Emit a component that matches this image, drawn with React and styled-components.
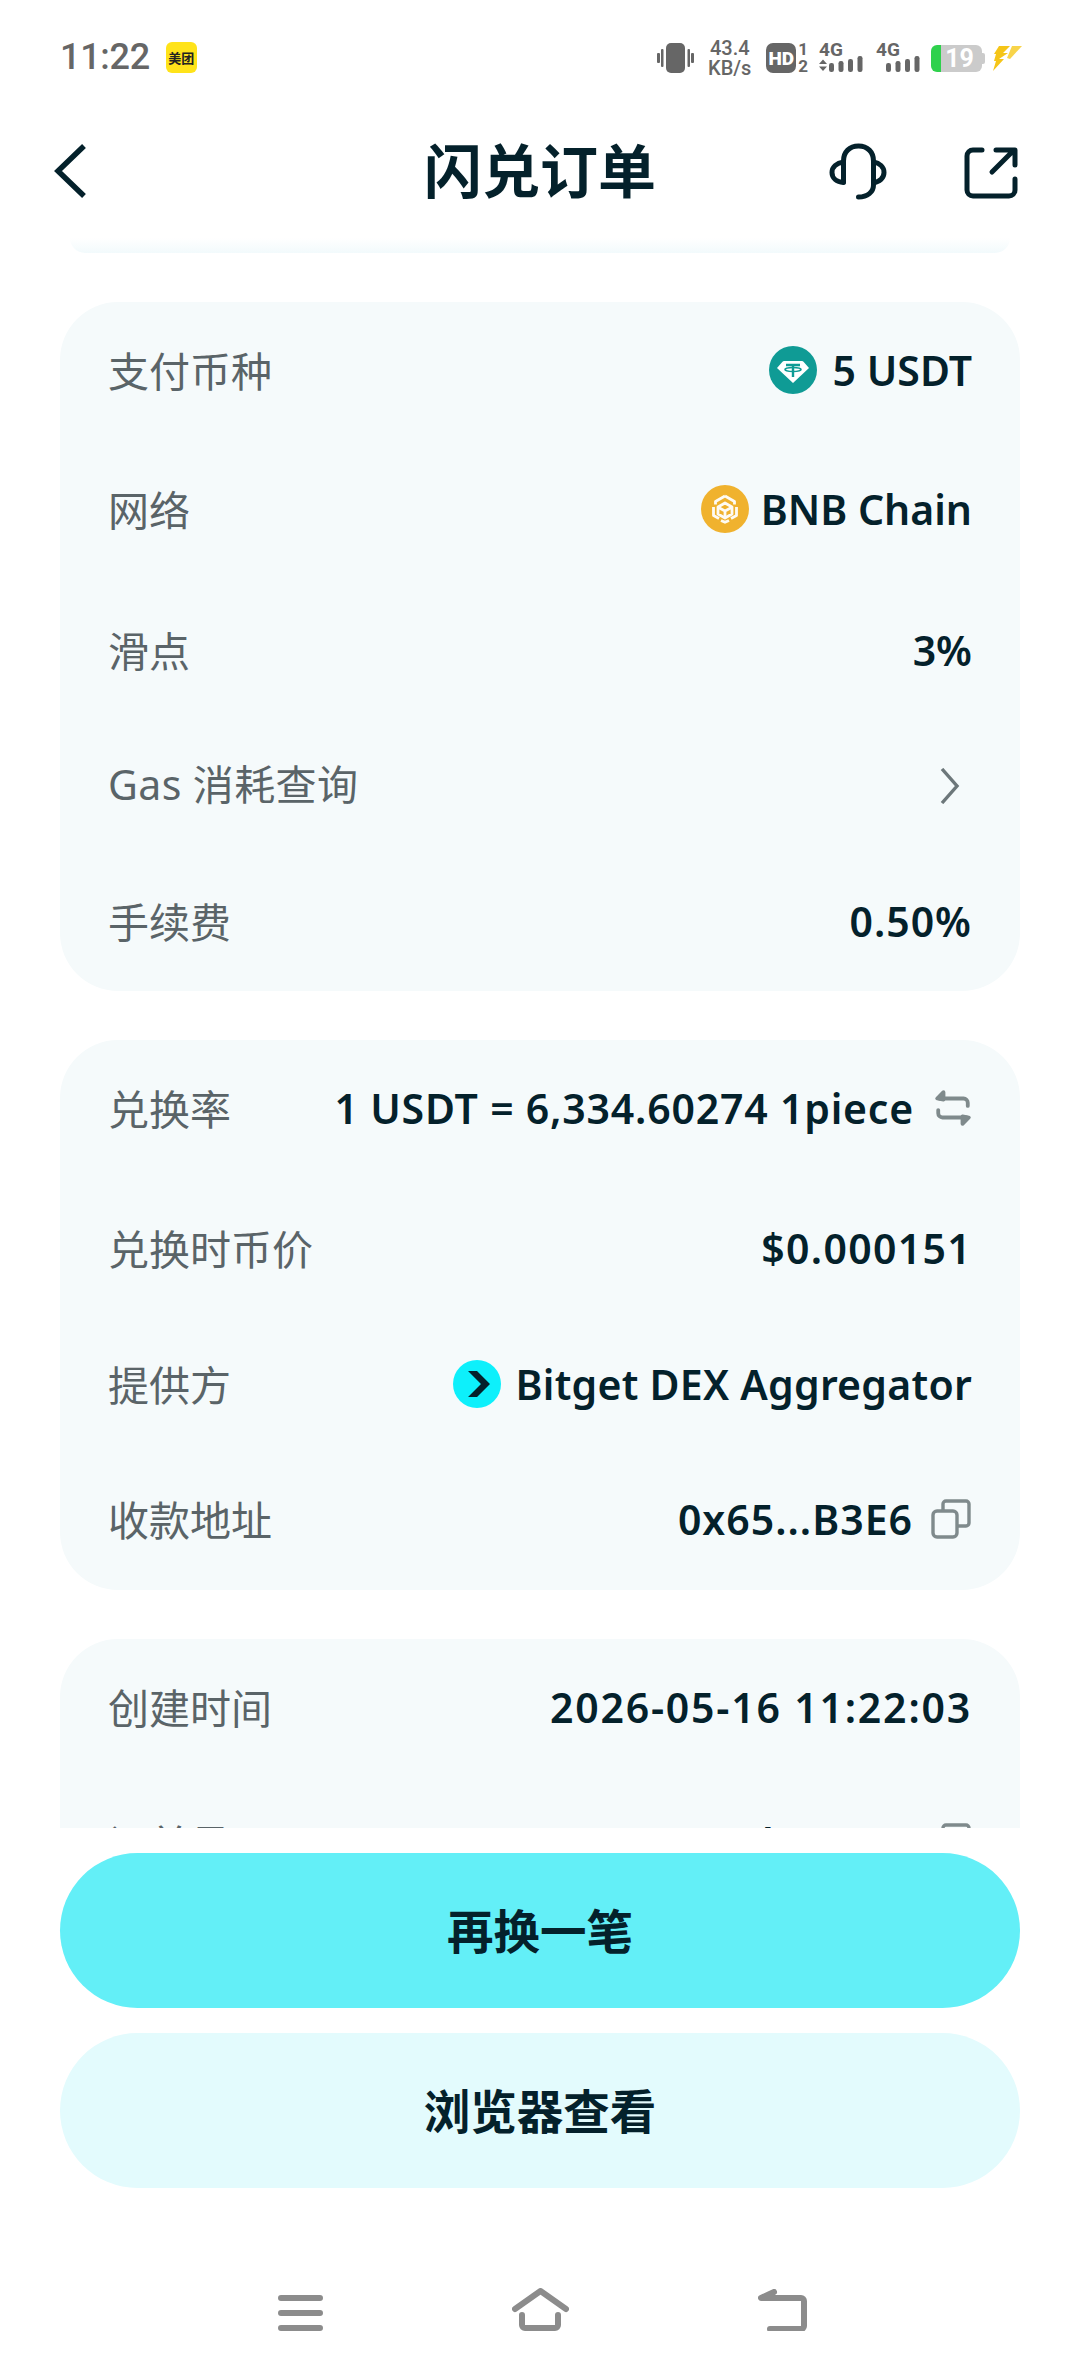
import React from "react";
import styled, { createGlobalStyle } from "styled-components";

const GlobalStyle = createGlobalStyle`
  html, body {
    margin: 0;
    padding: 0;
    background: #fff;
  }
  * {
    box-sizing: border-box;
  }
`;

const FONT = `"Noto Sans", "Noto Sans CJK SC", sans-serif`;
const CJK = `"Noto Sans CJK SC", "Noto Sans", sans-serif`;

const Page = styled.div`
  width: 1080px;
  height: 2376px;
  display: flex;
  flex-direction: column;
  overflow: hidden;
  background: #fff;
  font-family: ${FONT};
  color: #04212b;
`;

const StatusBar = styled.div`
  height: 114px;
  padding: 37px 58px 0 60px;
  display: flex;
  justify-content: space-between;
  align-items: flex-start;
  color: #666;
`;

const StatusLeft = styled.div`
  display: flex;
  align-items: center;
  gap: 16px;
  height: 40px;
`;

const Clock = styled.span`
  font-family: Roboto, sans-serif;
  font-weight: 500;
  font-size: 36px;
  letter-spacing: -0.3px;
`;

const AppBadge = styled.span`
  width: 31px;
  height: 31px;
  border-radius: 6px;
  background: #ffe31a;
  color: #222;
  font-family: ${CJK};
  font-size: 13px;
  font-weight: 700;
  display: flex;
  align-items: center;
  justify-content: center;
`;

const StatusRight = styled.div`
  display: flex;
  align-items: center;
  height: 40px;
  margin-top: 1px;
`;

const Speed = styled.div`
  margin: 0 13px 0 12px;
  width: 47px;
  display: flex;
  flex-direction: column;
  align-items: center;
  font-family: Roboto, sans-serif;
  font-weight: 500;
  font-size: 20px;
  line-height: 20px;
  white-space: nowrap;
`;

const HdBadge = styled.span`
  width: 30px;
  height: 30px;
  border-radius: 7px;
  background: #666;
  color: #fff;
  font-family: Roboto, sans-serif;
  font-weight: 900;
  font-size: 19px;
  display: flex;
  align-items: center;
  justify-content: center;
`;

const SimSlots = styled.div`
  margin: 0 11px 0 2px;
  display: flex;
  flex-direction: column;
  align-items: center;
  font-family: Roboto, sans-serif;
  font-weight: 700;
  font-size: 17px;
  line-height: 17px;
`;

const Signal = styled.div`
  position: relative;
  width: 45px;
  height: 30px;
  margin-right: ${(p) => p.$gap}px;
`;

const SignalLabel = styled.span`
  position: absolute;
  left: 0;
  top: -2px;
  font-family: Roboto, sans-serif;
  font-weight: 700;
  font-size: 19px;
  line-height: 18px;
`;

const Battery = styled.div`
  width: 51px;
  height: 27px;
  border-radius: 6px;
  background: linear-gradient(90deg, #2fd14d 0 10px, #cbcbcb 10px);
  color: #fff;
  font-family: Roboto, sans-serif;
  font-weight: 700;
  font-size: 25px;
  display: flex;
  align-items: center;
  justify-content: center;
  padding-left: 6px;
`;

const BatteryCap = styled.span`
  width: 3px;
  height: 11px;
  margin: 0 8px 0 0;
  border-radius: 0 2px 2px 0;
  background: #cbcbcb;
`;

const Header = styled.div`
  height: 124px;
  padding-bottom: 16px;
  position: relative;
  display: flex;
  align-items: center;
  justify-content: center;
  flex-shrink: 0;
`;

const Title = styled.h1`
  margin: 0;
  font-family: ${CJK};
  font-size: 58px;
  font-weight: 700;
  color: #04212b;
  line-height: 1;
`;

const HeaderIcon = styled.svg`
  position: absolute;
  top: ${(p) => p.$top}px;
  left: ${(p) => p.$left}px;
`;

const Scroller = styled.div`
  flex: 1;
  min-height: 0;
  overflow: hidden;
  display: flex;
  flex-direction: column;
  gap: 49px;
  padding: 0 60px;
`;

const PrevCardEnd = styled.div`
  height: 15px;
  margin: 0 10px;
  flex-shrink: 0;
  background: linear-gradient(#fff, #f2fafc);
  border-radius: 0 0 60px 60px;
`;

const Card = styled.section`
  flex-shrink: 0;
  background: #f5fafb;
  border-radius: 58px;
`;

const Row = styled.div`
  height: ${(p) => p.$h}px;
  padding: 0 48px;
  display: flex;
  align-items: center;
  justify-content: space-between;
`;

const Label = styled.span`
  font-family: ${CJK};
  font-size: 41px;
  color: #5a6468;
  padding-bottom: 2px;
`;

const LatinLabel = styled(Label)`
  font-family: ${FONT};
  letter-spacing: 0.4px;
  margin-bottom: 7px;
`;

const Value = styled.div`
  display: flex;
  align-items: center;
  gap: ${(p) => p.$gap || 12}px;
  font-size: 41px;
  font-weight: 600;
  letter-spacing: ${(p) => p.$track || 0}px;
  color: #04212b;
  white-space: nowrap;
`;

const Footer = styled.div`
  flex-shrink: 0;
  padding: 25px 60px 0;
  display: flex;
  flex-direction: column;
  gap: 25px;
  background: #fff;
`;

const Button = styled.button`
  height: 155px;
  border: 0;
  padding: 0 0 5px;
  border-radius: 78px;
  background: ${(p) => (p.$primary ? "#63eff7" : "#e3fbfd")};
  color: #04212b;
  font-family: ${CJK};
  font-size: 46.5px;
  font-weight: 700;
`;

const NavBar = styled.div`
  height: 188px;
  flex-shrink: 0;
  padding: 0 273px 45px 278px;
  display: flex;
  align-items: flex-end;
  justify-content: space-between;
`;

const ChevronSlot = styled.span`
  display: flex;
  margin-right: 12px;
`;

const Vibrate = () => (
  <svg width="37" height="30" viewBox="0 0 37 30">
    <rect x="9" y="0" width="19" height="30" rx="5" fill="#666" />
    <rect x="0" y="10" width="3" height="10" rx="1" fill="#666" />
    <rect x="4" y="6" width="2.5" height="18" rx="1" fill="#666" />
    <rect x="30.5" y="6" width="2.5" height="18" rx="1" fill="#666" />
    <rect x="34" y="10" width="3" height="10" rx="1" fill="#666" />
  </svg>
);

const Bars = ({ arrows }) => (
  <svg width="45" height="30" viewBox="0 0 45 30" style={{ position: "absolute", left: 0, top: 0 }}>
    {arrows && <path d="M0 21l4-4.5 4 4.5zM0 23.5h8L4 28z" fill="#666" />}
    <rect x="10" y="20" width="5" height="9" rx="2.2" fill="#666" />
    <rect x="19.5" y="18" width="5" height="11" rx="2.2" fill="#666" />
    <rect x="29" y="16" width="5" height="13" rx="2.2" fill="#666" />
    <rect x="38.5" y="13" width="5" height="16" rx="2.2" fill="#666" />
  </svg>
);

const Bolt = () => (
  <svg width="29" height="25" viewBox="0 0 29 25">
    <path d="M6 0h11L10 7h5L6 13h5L0 25l3-10H1l2-7H1z" fill="#f5c518" />
    <path d="M19 0h10L17 13l-3-1z" fill="#f8d44a" />
  </svg>
);

const TetherIcon = () => (
  <svg width="48" height="48" viewBox="0 0 48 48">
    <circle cx="24" cy="24" r="24" fill="#0f9b95" />
    <path d="M15 15h18a2 2 0 0 1 1.5.7l5.5 6.3L24 37 8 22l5.5-6.3a2 2 0 0 1 1.5-.7z" fill="#fff" />
    <path d="M17 19h14M24 19v12" fill="none" stroke="#0f9b95" strokeWidth="2.4" />
    <ellipse cx="24" cy="23.5" rx="8" ry="2" fill="none" stroke="#0f9b95" strokeWidth="1.6" />
  </svg>
);

const BnbIcon = () => (
  <svg width="48" height="48" viewBox="0 0 48 48">
    <circle cx="24" cy="24" r="24" fill="#f0b22e" />
    <g fill="none" stroke="#fff" strokeWidth="2.8" strokeLinejoin="round" opacity="0.95">
      <path d="M24 11l9.5 5.5v3M24 11l-9.5 5.5v3" />
      <path d="M12.5 22v8.5l5.5 3M35.5 22v8.5l-5.5 3" />
      <path d="M24 18l7 4v7l-7 4-7-4v-7z" />
      <path d="M17.5 22.5L24 26l6.5-3.5M24 26v7" />
      <path d="M20 35.5l4 1.8 4-1.8" />
    </g>
  </svg>
);

const BitgetIcon = () => (
  <svg width="48" height="48" viewBox="0 0 48 48">
    <circle cx="24" cy="24" r="24" fill="#0df0fb" />
    <path d="M15 11h9l13 13-13 13h-9l13-13z" fill="#04212b" />
  </svg>
);

const SwapIcon = () => (
  <svg width="38" height="38" viewBox="0 0 36 36" fill="none" stroke="#7f8a8c" strokeWidth="3.6" strokeLinecap="round" strokeLinejoin="round">
    <path d="M9 3L3 9l6 1z" fill="#7f8a8c" />
    <path d="M5 9h23a4 4 0 0 1 4 4v3" />
    <path d="M27 33l6-6-6-1z" fill="#7f8a8c" />
    <path d="M31 27H8a4 4 0 0 1-4-4v-3" />
  </svg>
);

const CopyIcon = () => (
  <svg width="42" height="40" viewBox="0 0 40 40" fill="none" stroke="#7f8a8c" strokeWidth="3.4" strokeLinejoin="round">
    <rect x="2" y="12" width="24" height="26" rx="4" />
    <path d="M12 12V5a3 3 0 0 1 3-3h20a3 3 0 0 1 3 3v19a3 3 0 0 1-3 3h-9" />
  </svg>
);

const ChevronRight = () => (
  <svg width="20" height="36" viewBox="0 0 20 36" fill="none" stroke="#6c777a" strokeWidth="3.4">
    <path d="M2 1l15 17L2 35" />
  </svg>
);

const NavIcon = ({ width, height, children }) => (
  <svg width={width} height={height} viewBox={`0 0 ${width} ${height}`} fill="none" stroke="#8c8c8c" strokeWidth="6" strokeLinecap="round" strokeLinejoin="round">
    {children}
  </svg>
);

export default function App() {
  return (
    <Page>
      <GlobalStyle />
      <StatusBar>
        <StatusLeft>
          <Clock>11:22</Clock>
          <AppBadge>美团</AppBadge>
        </StatusLeft>
        <StatusRight>
          <Vibrate />
          <Speed>
            <span>43.4</span>
            <span>KB/s</span>
          </Speed>
          <HdBadge>HD</HdBadge>
          <SimSlots>
            <span>1</span>
            <span>2</span>
          </SimSlots>
          <Signal $gap={12}>
            <SignalLabel>4G</SignalLabel>
            <Bars arrows />
          </Signal>
          <Signal $gap={10}>
            <SignalLabel>4G</SignalLabel>
            <Bars />
          </Signal>
          <Battery>19</Battery>
          <BatteryCap />
          <Bolt />
        </StatusRight>
      </StatusBar>

      <Header>
        <Title>闪兑订单</Title>
        <HeaderIcon $left={52} $top={29} width="36" height="56" viewBox="0 0 36 56" fill="none" stroke="#04212b" strokeWidth="5.5">
          <path d="M32 3L6 28l26 25" />
        </HeaderIcon>
        <HeaderIcon $left={810} $top={16} width="80" height="72" viewBox="0 0 80 72" fill="none" stroke="#04212b" strokeWidth="5" strokeLinecap="round" strokeLinejoin="round">
          <path d="M33.5 52V31c0-9 6-15 15-15s15 6 15 15v24c0 7-6 12-15 12" />
          <path d="M33.5 32c-7 1-11.5 5-11.5 10.5S26.5 52 33.5 52.5" />
          <path d="M63.5 32c6 1 10.5 5 10.5 10.5S69.5 52 63.5 52.5" />
        </HeaderIcon>
        <HeaderIcon $left={960} $top={31} width="60" height="56" viewBox="0 0 60 56" fill="none" stroke="#04212b" strokeWidth="5" strokeLinecap="round" strokeLinejoin="round">
          <path d="M22 5H13a6 6 0 0 0-6 6v34a6 6 0 0 0 6 6h36a6 6 0 0 0 6-6V34" />
          <path d="M32 27L53 6M36 5h19v15" />
        </HeaderIcon>
      </Header>

      <Scroller>
        <PrevCardEnd />
        <Card>
          <Row $h={136}>
            <Label>支付币种</Label>
            <Value $gap={16}>
              <TetherIcon />5 USDT
            </Value>
          </Row>
          <Row $h={141}>
            <Label>网络</Label>
            <Value $gap={12}>
              <BnbIcon />BNB Chain
            </Value>
          </Row>
          <Row $h={142}>
            <Label>滑点</Label>
            <Value>3%</Value>
          </Row>
          <Row $h={130}>
            <LatinLabel>Gas 消耗查询</LatinLabel>
            <ChevronSlot>
              <ChevronRight />
            </ChevronSlot>
          </Row>
          <Row $h={140}>
            <Label>手续费</Label>
            <Value $track={1}>0.50%</Value>
          </Row>
        </Card>

        <Card>
          <Row $h={136}>
            <Label>兑换率</Label>
            <Value $gap={20} $track={0.8}>
              1 USDT = 6,334.60274 1piece
              <SwapIcon />
            </Value>
          </Row>
          <Row $h={143}>
            <Label>兑换时币价</Label>
            <Value $track={1.3}>$0.000151</Value>
          </Row>
          <Row $h={129}>
            <Label>提供方</Label>
            <Value $gap={15} $track={0.25}>
              <BitgetIcon />Bitget DEX Aggregator
            </Value>
          </Row>
          <Row $h={142}>
            <Label>收款地址</Label>
            <Value $gap={17} $track={1}>
              0x65...B3E6
              <CopyIcon />
            </Value>
          </Row>
        </Card>

        <Card>
          <Row $h={136}>
            <Label>创建时间</Label>
            <Value $track={1.8}>2026-05-16 11:22:03</Value>
          </Row>
          <Row $h={136}>
            <Label>订单号</Label>
            <Value $gap={17} $track={1}>
              0x6d...8E3A
              <CopyIcon />
            </Value>
          </Row>
        </Card>
      </Scroller>

      <Footer>
        <Button $primary>再换一笔</Button>
        <Button>浏览器查看</Button>
      </Footer>

      <NavBar>
        <NavIcon width="45" height="36">
          <path d="M3 3h39M3 18h39M3 33h39" />
        </NavIcon>
        <NavIcon width="57" height="43">
          <path d="M3 21L28.5 3 54 21" />
          <path d="M10 27v10a3 3 0 0 0 3 3h30a3 3 0 0 0 3-3V27" />
        </NavIcon>
        <NavIcon width="49" height="42">
          <path d="M16 3L3 9h40a3 3 0 0 1 3 3v25a3 3 0 0 1-3 3H12" />
        </NavIcon>
      </NavBar>
    </Page>
  );
}
